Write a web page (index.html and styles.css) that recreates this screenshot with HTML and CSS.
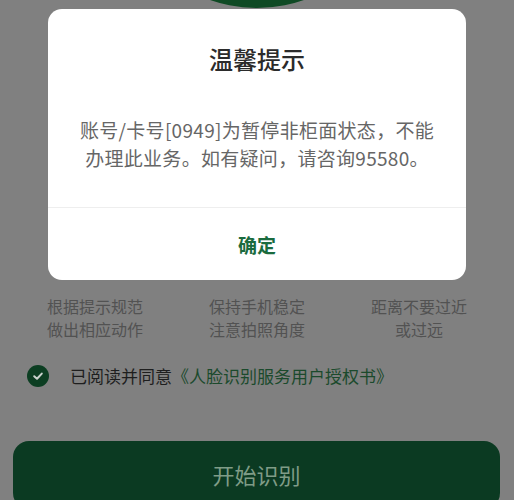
FILE: index.html
```html
<!DOCTYPE html>
<html lang="zh-CN">
  <head>
    <meta charset="UTF-8" />
    <meta name="viewport" content="width=device-width, initial-scale=1.0" />
    <title>人脸识别</title>
    <link rel="stylesheet" href="styles.css">
  </head>
  <body>
    <div class="page">
      <div class="face"></div>

      <div class="tips">
        <div class="tip">根据提示规范<br />做出相应动作</div>
        <div class="tip">保持手机稳定<br />注意拍照角度</div>
        <div class="tip">距离不要过近<br />或过远</div>
      </div>

      <div class="agree">
        <span class="check">
          <svg width="12" height="12" viewBox="0 0 12 12">
            <path d="M2.2 6.2 L5 8.8 L9.8 3.6" fill="none" stroke="#c9d2cc" stroke-width="2" stroke-linecap="round" stroke-linejoin="round" />
          </svg>
        </span>
        <span>已阅读并同意<a class="link">《人脸识别服务用户授权书》</a></span>
      </div>

      <button class="start">开始识别</button>
    </div>

    <div class="dialog">
      <h2 class="dialog-title">温馨提示</h2>
      <p class="dialog-text">账号/卡号[0949]为暂停非柜面状态，不能办理此业务。如有疑问，请咨询95580。</p>
      <div class="dialog-footer">
        <button class="dialog-ok">确定</button>
      </div>
    </div>
  </body>
</html>
```

FILE: styles.css
```css
body {
  margin: 0;
  padding: 0;
  height: 500px;
  overflow: hidden;
  background-color: #808080;
  font-family: "Noto Sans CJK SC", "Noto Sans", sans-serif;
}

.page {
  display: flex;
  flex-direction: column;
}

.face {
  width: 284px;
  height: 284px;
  margin: -276px auto 0;
  border-radius: 50%;
  background-color: #0f4a24;
}

.tips {
  display: grid;
  grid-template-columns: repeat(3, 1fr);
  padding: 0 14px;
  margin-top: 287px;
}

.tip {
  text-align: center;
  font-size: 16px;
  line-height: 23px;
  color: #525252;
}

.agree {
  display: flex;
  align-items: center;
  gap: 21px;
  margin-top: 22px;
  padding-left: 27px;
  font-size: 17px;
  line-height: 26px;
  color: #1e1e1e;
}

.check {
  width: 22px;
  height: 22px;
  border-radius: 50%;
  background-color: #0c3e22;
  display: flex;
  align-items: center;
  justify-content: center;
}

.link {
  color: #1b4a2c;
}

.start {
  margin: 52px 14px 0 13px;
  height: 68px;
  padding-bottom: 4px;
  border: none;
  border-radius: 16px;
  background-color: #0b3a22;
  color: #7f9c87;
  font-family: inherit;
  font-size: 22px;
}

.dialog {
  position: fixed;
  left: 48px;
  top: 9px;
  width: 418px;
  height: 271px;
  background: white;
  border-radius: 14px;
  display: flex;
  flex-direction: column;
}

.dialog-title {
  margin: 33px 0 0;
  text-align: center;
  font-size: 24px;
  line-height: 34px;
  font-weight: 500;
  color: #2b2b2b;
}

.dialog-text {
  margin: 40px 0 0;
  padding: 0 28px;
  text-align: center;
  font-size: 19px;
  line-height: 28px;
  letter-spacing: 0.3px;
  color: #666;
}

.dialog-footer {
  margin-top: auto;
  height: 72px;
  border-top: 1px solid #eeeeee;
  display: flex;
}

.dialog-ok {
  flex: 1;
  border: none;
  background: none;
  font-family: inherit;
  font-size: 19px;
  font-weight: bold;
  color: #1a6b3e;
}
```
